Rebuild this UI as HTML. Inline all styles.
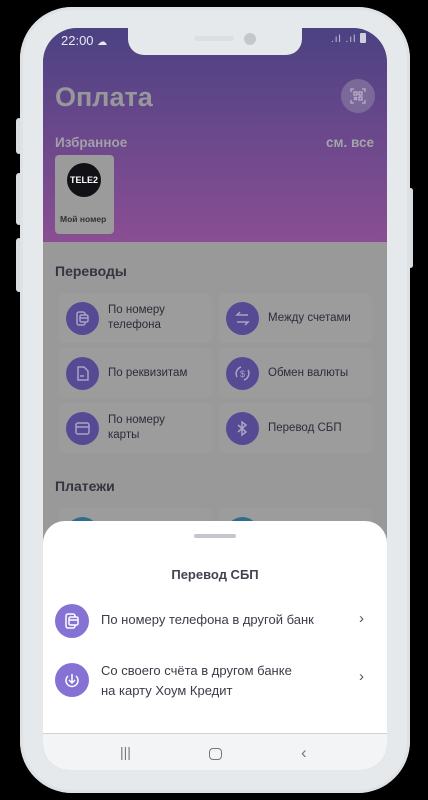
<!DOCTYPE html>
<html><head><meta charset="utf-8"><style>
*{margin:0;padding:0;box-sizing:border-box}
body{width:428px;height:800px;background:#000;position:relative;overflow:hidden;font-family:"Liberation Sans",sans-serif}
.btn{position:absolute;background:#d9dcdf;border-radius:3px}
.phone{position:absolute;left:20px;top:7px;width:390px;height:786px;background:#e6e9eb;border-radius:52px;box-shadow:inset 0 0 0 3px #dfe2e5}
.screen{position:absolute;left:43px;top:28px;width:344px;height:742px;border-radius:34px 34px 26px 26px;overflow:hidden;background:#999}
.top{position:absolute;left:0;top:0;width:344px;height:214px;background:linear-gradient(#4b4283,#8a4e93)}
.notch{position:absolute;left:85px;top:0;width:174px;height:27px;background:#e6e9eb;border-radius:0 0 16px 16px}
.t{position:absolute;white-space:nowrap}
.card{position:absolute;width:154px;height:50px;background:#9c9c9c;border-radius:6px}
.ic{position:absolute;left:8px;top:9px;width:33px;height:33px;border-radius:50%;background:#574a95}
.ic svg{position:absolute;left:0;top:0}
.card .lbl{position:absolute;left:50px;top:0;height:50px;display:flex;align-items:center;font-size:11.5px;color:#2c2c3a;line-height:15px}
.sheet{position:absolute;left:0;top:493px;width:344px;height:212px;background:#fff;border-radius:22px 22px 0 0}
.nav{position:absolute;left:0;top:705px;width:344px;height:37px;background:#f3f4f6;border-top:1px solid #cfd2d6}
</style></head><body>
<div class="btn" style="left:16px;top:118px;width:6px;height:36px"></div>
<div class="btn" style="left:16px;top:173px;width:6px;height:52px"></div>
<div class="btn" style="left:16px;top:238px;width:6px;height:54px"></div>
<div class="btn" style="left:408px;top:188px;width:5px;height:80px"></div>
<div class="phone"></div>
<div class="screen">
 <div class="top"></div>
 <div class="notch"><div style="position:absolute;left:66px;top:8px;width:40px;height:5px;border-radius:3px;background:#dcdfe2"></div><div style="position:absolute;left:116px;top:5px;width:12px;height:12px;border-radius:50%;background:#c4c8cc"></div></div>
 <div class="t" style="left:18px;top:5px;font-size:13px;color:#e8e8ee">22:00 <span style="font-size:10px">☁</span></div>
 <div class="t" style="left:288px;top:5px;font-size:10px;color:#c9c9d6;letter-spacing:1px">.ıl .ıl <span style="display:inline-block;width:6px;height:10px;background:#d0d0dc;border-radius:1px;vertical-align:-1px"></span></div>
 <div class="t" style="left:12px;top:54px;font-size:27px;font-weight:bold;color:#98989c">Оплата</div>
 <div style="position:absolute;left:298px;top:51px;width:34px;height:34px;border-radius:50%;background:#7b6a99"><svg width="34" height="34" viewBox="0 0 34 34" fill="none" stroke="#b8b0c8" stroke-width="1.3"><path d="M10 13v-3h3M21 10h3v3M24 21v3h-3M13 24h-3v-3"/><rect x="13" y="13" width="3" height="3"/><rect x="18" y="13" width="3" height="3"/><rect x="18" y="18" width="3" height="3"/><path d="M13 18l3 3M16 18l-3 3"/></svg></div>
 <div class="t" style="left:12px;top:107px;font-size:13.5px;font-weight:bold;color:#a2a0a8">Избранное</div>
 <div class="t" style="right:13px;top:107px;font-size:13.5px;font-weight:bold;color:#a6a4ac">см. все</div>
 <div style="position:absolute;left:12px;top:127px;width:59px;height:79px;background:#9b9b9b;border-radius:4px">
  <div style="position:absolute;left:12px;top:8px;width:34px;height:34px;border-radius:50%;background:#121216;color:#fff;font-size:9px;font-weight:bold;text-align:center;line-height:34px">TELE2</div>
  <div class="t" style="left:5px;top:59px;font-size:8.5px;font-weight:bold;color:#333">Мой номер</div>
 </div>
 <div class="t" style="left:12px;top:235px;font-size:14px;font-weight:bold;color:#353540">Переводы</div>
 <div class="card" style="left:15px;top:265px"><div class="ic"><svg width="33" height="33" viewBox="0 0 33 33" fill="none" stroke="#a9a3c4" stroke-width="1.5"><rect x="11" y="10" width="8" height="13" rx="2"/><rect x="14" y="13" width="8" height="7" rx="1.5" fill="#574a95"/><path d="M14 16h8"/></svg></div><div class="lbl">По номеру<br>телефона</div></div>
 <div class="card" style="left:175px;top:265px"><div class="ic"><svg width="33" height="33" viewBox="0 0 33 33" fill="none" stroke="#a9a3c4" stroke-width="1.5"><path d="M22 13H11l3-3M11 20h11l-3 3"/></svg></div><div class="lbl">Между счетами</div></div>
 <div class="card" style="left:15px;top:320px"><div class="ic"><svg width="33" height="33" viewBox="0 0 33 33" fill="none" stroke="#a9a3c4" stroke-width="1.5"><path d="M12 10h6l4 4v9h-10z"/><path d="M14 19h4"/></svg></div><div class="lbl">По реквизитам</div></div>
 <div class="card" style="left:175px;top:320px"><div class="ic"><svg width="33" height="33" viewBox="0 0 33 33" fill="none" stroke="#a9a3c4" stroke-width="1.5"><path d="M11 20a7 7 0 0 1 4-10M22 13a7 7 0 0 1-4 10"/><text x="16.5" y="20" font-size="9" text-anchor="middle" fill="#a9a3c4" stroke="none" font-family="Liberation Sans">$</text></svg></div><div class="lbl">Обмен валюты</div></div>
 <div class="card" style="left:15px;top:375px"><div class="ic"><svg width="33" height="33" viewBox="0 0 33 33" fill="none" stroke="#a9a3c4" stroke-width="1.5"><rect x="10" y="11" width="13" height="11" rx="2"/><path d="M10 15h13"/></svg></div><div class="lbl">По номеру<br>карты</div></div>
 <div class="card" style="left:175px;top:375px"><div class="ic"><svg width="33" height="33" viewBox="0 0 33 33" fill="none" stroke="#a9a3c4" stroke-width="1.5"><path d="M12 13l8 7-4 3v-13l4 3-8 7"/></svg></div><div class="lbl">Перевод СБП</div></div>
 <div class="t" style="left:12px;top:450px;font-size:14px;font-weight:bold;color:#353540">Платежи</div>
 <div class="card" style="left:15px;top:480px"><div class="ic" style="background:#2f6d8c"></div></div>
 <div class="card" style="left:175px;top:480px"><div class="ic" style="background:#2f6d8c"></div></div>
 <div class="sheet">
  <div style="position:absolute;left:151px;top:13px;width:42px;height:4px;border-radius:2px;background:#c4c6cc"></div>
  <div class="t" style="left:0;width:344px;text-align:center;top:46px;font-size:13px;font-weight:bold;color:#444450">Перевод СБП</div>
  <div style="position:absolute;left:12px;top:83px;width:34px;height:34px;border-radius:50%;background:#8572d4"><svg width="34" height="34" viewBox="0 0 34 34" fill="none" stroke="#fff" stroke-width="1.5"><rect x="11" y="10" width="9" height="14" rx="2"/><rect x="14" y="13" width="9" height="8" rx="1.5" fill="#8572d4"/><path d="M14 16h9"/></svg></div>
  <div class="t" style="left:58px;top:91px;font-size:13px;color:#3c3c48">По номеру телефона в другой банк</div>
  <div class="t" style="left:316px;top:89px;font-size:15px;color:#555">›</div>
  <div style="position:absolute;left:12px;top:142px;width:34px;height:34px;border-radius:50%;background:#8572d4"><svg width="34" height="34" viewBox="0 0 34 34" fill="none" stroke="#fff" stroke-width="1.5"><path d="M13 13a6 6 0 1 0 8 0M17 11v9M14 17l3 3 3-3"/></svg></div>
  <div class="t" style="left:58px;top:140px;font-size:13px;color:#3c3c48;line-height:20px">Со своего счёта в другом банке<br>на карту Хоум Кредит</div>
  <div class="t" style="left:316px;top:147px;font-size:15px;color:#555">›</div>
 </div>
 <div class="nav">
  <div class="t" style="left:77px;top:10px;font-size:14px;color:#777">|||</div>
  <div style="position:absolute;left:166px;top:14px;width:13px;height:12px;border:1.5px solid #777;border-radius:4px"></div>
  <div class="t" style="left:258px;top:9px;font-size:17px;color:#777">‹</div>
 </div>
</div>
</body></html>
